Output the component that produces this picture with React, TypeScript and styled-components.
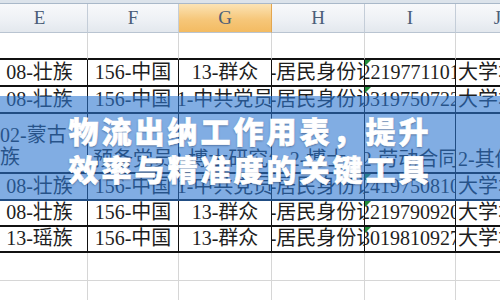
import styled, { createGlobalStyle } from "styled-components";

const GlobalStyle = createGlobalStyle`
  html, body {
    margin: 0;
    padding: 0;
    background: #ffffff;
  }
  body {
    font-family: "Liberation Serif", "Noto Sans CJK SC", serif;
  }
`;

const Page = styled.div`
  position: relative;
  width: 500px;
  height: 300px;
  overflow: hidden;
  background: #ffffff;
`;

const TopStrip = styled.div`
  height: 4px;
  box-sizing: border-box;
  background: #dce3eb;
  border-bottom: 1px solid #a9b8c9;
`;

const Sheet = styled.div`
  display: grid;
  grid-template-columns: 96px 91px 93px 93px 91px 84px;
  grid-template-rows: 29px 27px 27px 27px 60px 27px 26px 26px 28px 28px;
  margin-left: -8px;
`;

const HeadCell = styled.div<{ $active?: boolean }>`
  display: flex;
  align-items: center;
  justify-content: center;
  box-sizing: border-box;
  border-right: 1px solid ${(p) => (p.$active ? "#e3a64f" : "#c4cdd8")};
  border-bottom: 1px solid #b9c4d1;
  background: ${(p) =>
    p.$active
      ? "linear-gradient(#fbe3b5, #f6c77a 55%, #f3bb62)"
      : "linear-gradient(#f8f9fb, #eef1f5 55%, #e3e8ee)"};
  color: #4b5e78;
  font-size: 19px;
`;

const Cell = styled.div<{ $data?: boolean; $edge?: boolean; $left?: boolean; $flag?: boolean }>`
  position: relative;
  display: flex;
  align-items: flex-end;
  justify-content: ${(p) => (p.$left ? "flex-start" : "center")};
  box-sizing: border-box;
  overflow: hidden;
  padding: ${(p) => (p.$left ? "0 0 2px 2px" : "0 0 2px 0")};
  border-right: 1px solid ${(p) => (p.$data ? "#111" : "#d6d6d6")};
  border-bottom: ${(p) => (p.$data || p.$edge ? "2px solid #111" : "1px solid #d6d6d6")};
  color: #1e1e1e;
  font-size: 20px;
  line-height: 22px;
  white-space: nowrap;

  & > span {
    flex-shrink: 0;
  }

  /* green "number stored as text" marker */
  &::before {
    content: "";
    display: ${(p) => (p.$flag ? "block" : "none")};
    position: absolute;
    top: 0;
    left: 0;
    border-top: 6px solid #1f8a3a;
    border-right: 6px solid transparent;
  }
`;

const Wrapped = styled.span`
  display: flex;
  flex-direction: column;
  padding-left: 6px;
  padding-bottom: 2px;
`;

const Banner = styled.div`
  position: absolute;
  left: 0;
  right: 0;
  top: 96px;
  height: 105px;
  display: flex;
  flex-direction: column;
  align-items: center;
  justify-content: center;
  background: rgba(45, 118, 208, 0.6);
`;

const Title = styled.div`
  color: #ffffff;
  font-family: "Noto Sans CJK SC", "Noto Sans", sans-serif;
  font-weight: 900;
  font-size: 30px;
  line-height: 38px;
  letter-spacing: 3px;
  -webkit-text-stroke: 0.6px #ffffff;
  text-shadow: 0 1px 2px rgba(20, 40, 80, 0.55);
  white-space: nowrap;
`;

type Row = {
  cells: string[];
  wrapFirst?: boolean;
};

const columns = ["E", "F", "G", "H", "I", "J"];

const rows: Row[] = [
  { cells: ["08-壮族", "156-中国", "13-群众", "1-居民身份证", "452122197711012345", "大学本科"] },
  { cells: ["08-壮族", "156-中国", "1-中共党员", "1-居民身份证", "452103197507221234", "大学本科"] },
  { cells: ["02-蒙古族", "预备党员", "12-博士研究生", "2-博士", "2-劳动合同", "2-其他"], wrapFirst: true },
  { cells: ["08-壮族", "156-中国", "1-中共党员", "1-居民身份证", "452124197508101234", "大学本科"] },
  { cells: ["08-壮族", "156-中国", "13-群众", "1-居民身份证", "452122197909201234", "大学本科"] },
  { cells: ["13-瑶族", "156-中国", "13-群众", "1-居民身份证", "452130198109271234", "大学本科"] },
];

export default function App() {
  return (
    <>
      <GlobalStyle />
      <Page>
        <TopStrip />
        <Sheet>
          {columns.map((c) => (
            <HeadCell key={c} $active={c === "G"}>
              {c}
            </HeadCell>
          ))}
          {columns.map((c) => (
            <Cell key={"top" + c} $edge />
          ))}
          {rows.map((row, r) =>
            row.cells.map((text, i) => {
              if (i === 0 && row.wrapFirst) {
                return (
                  <Cell key={r + "-" + i} $data $left>
                    <Wrapped>
                      <span>02-蒙古</span>
                      <span>族</span>
                    </Wrapped>
                  </Cell>
                );
              }
              return (
                <Cell key={r + "-" + i} $data $left={i === 5} $flag={i === 4 && !row.wrapFirst}>
                  <span>{text}</span>
                </Cell>
              );
            })
          )}
          {[0, 1].map((r) =>
            columns.map((c) => <Cell key={"blank" + r + c} />)
          )}
        </Sheet>
        <Banner>
          <Title>物流出纳工作用表，提升</Title>
          <Title>效率与精准度的关键工具</Title>
        </Banner>
      </Page>
    </>
  );
}
